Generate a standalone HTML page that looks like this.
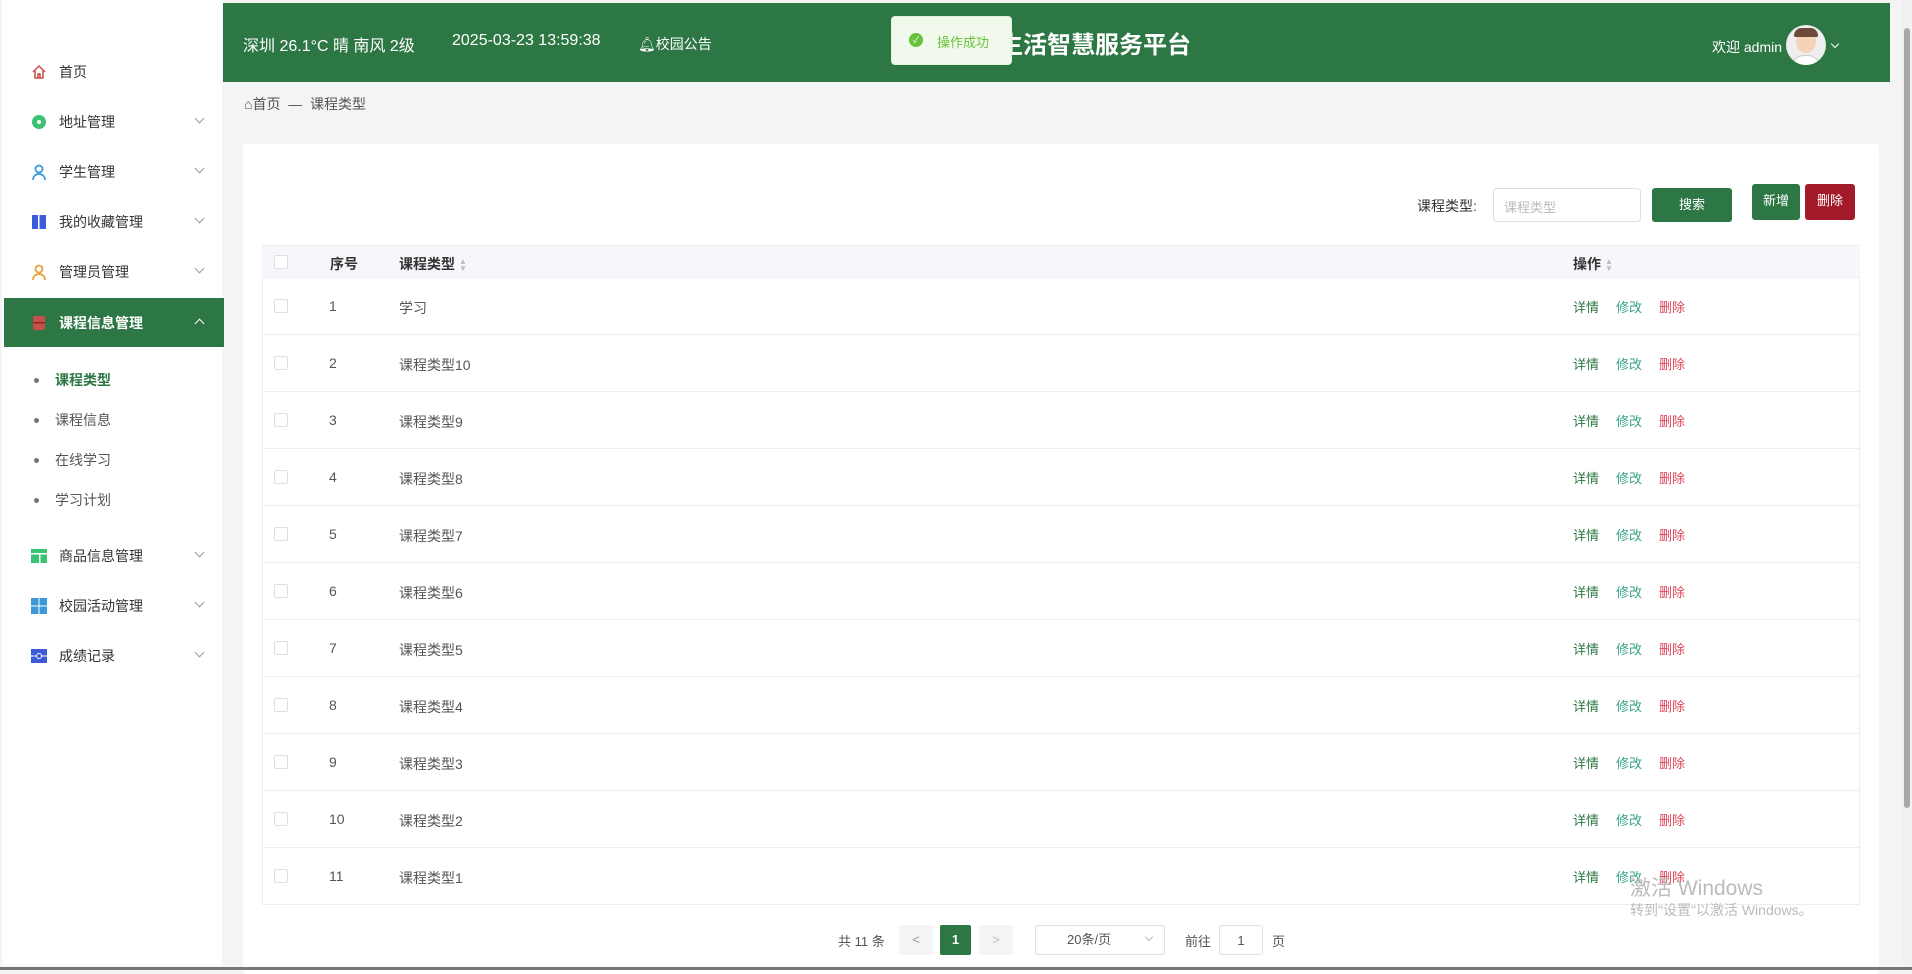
<!DOCTYPE html>
<html><head><meta charset="utf-8"><style>
*{margin:0;padding:0;box-sizing:border-box}
body{width:1912px;height:970px;overflow:hidden;background:#f4f4f4;font-family:"Liberation Sans","Noto Sans CJK SC",sans-serif;position:relative;color:#333}
.abs{position:absolute}
#side{left:2px;top:0;width:220px;height:966px;background:#fff}
.mi{position:absolute;left:2px;width:220px;height:50px;display:flex;align-items:center;font-size:14px;color:#333}
.mi .ic{position:absolute;left:27px;width:16px;height:16px}
.mi .tx{position:absolute;left:55px}
.mi .ar{position:absolute;left:192px;top:18px;width:7px;height:7px;border-right:1px solid #999;border-bottom:1px solid #999;transform:rotate(45deg)}
.sub{position:absolute;left:0;font-size:14px;color:#555}
.sub:before{content:"";position:absolute;left:-21px;top:8px;width:5px;height:5px;border-radius:50%;background:#777}
#hdr{left:223px;top:3px;width:1667px;height:79px;background:#2d7745;color:#fff}
.row{position:absolute;left:262px;width:1598px;height:57px;border-bottom:1px solid #ebeef5;font-size:14px;color:#555}
.row .cb{position:absolute;left:12px;top:21px;width:14px;height:14px;border:1px solid #dcdfe6;border-radius:2px;background:#fff}
.row .n{position:absolute;left:67px;top:20px}
.row .t{position:absolute;left:137px;top:20px}
.row .a{position:absolute;left:1311px;top:19px;font-size:13px}
.a span{margin-right:17px}
.g{color:#2d7745}.tl{color:#3aa38a}.r{color:#e0435a}
.btn{position:absolute;color:#fff;font-size:13px;border-radius:3px;text-align:center}
.so{color:#bbb;font-size:8px;display:inline-block;line-height:7px;vertical-align:middle;margin-left:4px}
</style></head><body>
<div id="side" class="abs">
 <div class="mi" style="top:47px"><svg class="ic" viewBox="0 0 16 16"><path d="M2 8L8 2l6 6M4 6v8h8V6M7 14v-4h2v4" fill="none" stroke="#c9504a" stroke-width="1.5"/></svg><span class="tx">首页</span></div>
 <div class="mi" style="top:97px"><svg class="ic" viewBox="0 0 16 16"><circle cx="8" cy="8" r="7" fill="#3cc273"/><circle cx="8" cy="8" r="2" fill="#fff"/></svg><span class="tx">地址管理</span><i class="ar"></i></div>
 <div class="mi" style="top:147px"><svg class="ic" viewBox="0 0 16 16"><circle cx="8" cy="5" r="3.5" fill="none" stroke="#3a9ad9" stroke-width="1.8"/><path d="M2 16c0-4 3-6 6-6s6 2 6 6" fill="none" stroke="#3a9ad9" stroke-width="1.8"/></svg><span class="tx">学生管理</span><i class="ar"></i></div>
 <div class="mi" style="top:197px"><svg class="ic" viewBox="0 0 16 16"><rect x="1" y="1" width="14" height="14" fill="#3b5bdb"/><rect x="7" y="1" width="1.5" height="14" fill="#fff"/></svg><span class="tx">我的收藏管理</span><i class="ar"></i></div>
 <div class="mi" style="top:247px"><svg class="ic" viewBox="0 0 16 16"><circle cx="8" cy="5" r="3.5" fill="none" stroke="#e6a23c" stroke-width="1.8"/><path d="M2 16c0-4 3-6 6-6s6 2 6 6" fill="none" stroke="#e6a23c" stroke-width="1.8"/></svg><span class="tx">管理员管理</span><i class="ar"></i></div>
 <div class="mi" style="top:298px;height:49px;background:#2d7745;color:#fff;font-weight:bold"><svg class="ic" viewBox="0 0 16 16"><rect x="2" y="1" width="12" height="14" rx="2" fill="#c9504a"/><rect x="2" y="7" width="12" height="1.5" fill="#8b2a25"/></svg><span class="tx">课程信息管理</span><i class="ar" style="transform:rotate(-135deg);top:22px;border-color:#fff"></i></div>
 <div class="sub" style="top:370px;left:53px;color:#2d7745;font-weight:bold">课程类型</div>
 <div class="sub" style="top:410px;left:53px">课程信息</div>
 <div class="sub" style="top:450px;left:53px">在线学习</div>
 <div class="sub" style="top:490px;left:53px">学习计划</div>
 <div class="mi" style="top:531px"><svg class="ic" viewBox="0 0 16 16"><rect x="0" y="1" width="16" height="14" fill="#3cc273"/><rect x="0" y="5" width="16" height="1.5" fill="#fff"/><rect x="8" y="6" width="1.5" height="9" fill="#fff"/></svg><span class="tx">商品信息管理</span><i class="ar"></i></div>
 <div class="mi" style="top:581px"><svg class="ic" viewBox="0 0 16 16"><rect x="0" y="0" width="7.5" height="7.5" fill="#3a9ad9"/><rect x="8.5" y="0" width="7.5" height="7.5" fill="#3a9ad9"/><rect x="0" y="8.5" width="7.5" height="7.5" fill="#3a9ad9"/><rect x="8.5" y="8.5" width="7.5" height="7.5" fill="#3a9ad9"/></svg><span class="tx">校园活动管理</span><i class="ar"></i></div>
 <div class="mi" style="top:631px"><svg class="ic" viewBox="0 0 16 16"><rect x="0" y="1" width="16" height="14" fill="#3b5bdb"/><path d="M0 8h5M11 8h5" stroke="#fff"/><circle cx="8" cy="8" r="2.5" fill="none" stroke="#fff"/></svg><span class="tx">成绩记录</span><i class="ar"></i></div>
</div>
<div id="hdr" class="abs">
 <div class="abs" style="left:20px;top:29px;font-size:16px">深圳 26.1°C 晴 南风 2级</div>
 <div class="abs" style="left:229px;top:29px;font-size:16px">2025-03-23 13:59:38</div>
 <div class="abs" style="left:415px;top:31px;font-size:14px">🔔︎校园公告</div>
 <div class="abs" style="left:728px;top:22px;font-size:24px;font-weight:bold;width:240px;text-align:right">校园生活智慧服务平台</div>
 <div class="abs" style="left:1489px;top:34px;font-size:14px">欢迎 admin</div>
 <div class="abs" style="left:1563px;top:22px;width:40px;height:40px;border-radius:50%;background:#eee;overflow:hidden"><div style="position:absolute;left:10px;top:6px;width:20px;height:22px;border-radius:50%;background:#f4d3b8"></div><div style="position:absolute;left:8px;top:3px;width:24px;height:9px;border-radius:10px 10px 2px 2px;background:#6b4a3a"></div><div style="position:absolute;left:6px;top:30px;width:28px;height:14px;border-radius:12px 12px 0 0;background:#fff;border:1px solid #ccc"></div></div>
 <div class="abs" style="left:1609px;top:38px;width:6px;height:6px;border-right:1px solid #fff;border-bottom:1px solid #fff;transform:rotate(45deg)"></div>
</div>
<div class="abs" style="left:891px;top:16px;width:121px;height:49px;background:#f0f9eb;border:1px solid #e1f3d8;border-radius:4px;font-size:13px;color:#67c23a"><span style="position:absolute;left:17px;top:16px;width:14px;height:14px;border-radius:50%;background:#67c23a;color:#fff;font-size:9px;text-align:center;line-height:14px">✓</span><span style="position:absolute;left:45px;top:15px">操作成功</span></div>
<div class="abs" style="left:1902px;top:0;width:10px;height:966px;background:#f1f1f1"><div style="position:absolute;left:2px;top:28px;width:6px;height:780px;background:#a8a8a8;border-radius:3px"></div></div>
<div class="abs" style="left:244px;top:94px;font-size:14px;color:#555">⌂首页 &nbsp;— &nbsp;课程类型</div>
<div class="abs" style="left:243px;top:144px;width:1636px;height:830px;background:#fff;border-radius:4px"></div>
<div class="abs" style="left:1417px;top:196px;font-size:14px;color:#333">课程类型:</div>
<div class="abs" style="left:1493px;top:188px;width:148px;height:34px;border:1px solid #dcdfe6;border-radius:4px;font-size:13px;color:#bbb;padding:8px 10px">课程类型</div>
<div class="btn" style="left:1652px;top:188px;width:80px;height:34px;line-height:34px;background:#2d7745">搜索</div>
<div class="btn" style="left:1752px;top:184px;width:48px;height:36px;line-height:34px;background:#2d7745">新增</div>
<div class="btn" style="left:1805px;top:184px;width:50px;height:36px;line-height:34px;background:#a31b2b">删除</div>
<div class="abs" style="left:262px;top:245px;width:1598px;height:33px;background:#f6f7fb;border-top:1px solid #ebeef5;border-bottom:1px solid #ebeef5;font-size:14px;font-weight:bold;color:#333">
 <div class="abs" style="left:12px;top:9px;width:14px;height:14px;border:1px solid #dcdfe6;border-radius:2px;background:#fff"></div>
 <div class="abs" style="left:68px;top:8px">序号</div>
 <div class="abs" style="left:137px;top:8px">课程类型<span class="so">▲<br>▼</span></div>
 <div class="abs" style="left:1311px;top:8px">操作<span class="so">▲<br>▼</span></div>
</div>
<div class="row" style="top:278px"><i class="cb"></i><span class="n">1</span><span class="t">学习</span><span class="a"><span class="g">详情</span><span class="tl">修改</span><span class="r">删除</span></span></div>
<div class="row" style="top:335px"><i class="cb"></i><span class="n">2</span><span class="t">课程类型10</span><span class="a"><span class="g">详情</span><span class="tl">修改</span><span class="r">删除</span></span></div>
<div class="row" style="top:392px"><i class="cb"></i><span class="n">3</span><span class="t">课程类型9</span><span class="a"><span class="g">详情</span><span class="tl">修改</span><span class="r">删除</span></span></div>
<div class="row" style="top:449px"><i class="cb"></i><span class="n">4</span><span class="t">课程类型8</span><span class="a"><span class="g">详情</span><span class="tl">修改</span><span class="r">删除</span></span></div>
<div class="row" style="top:506px"><i class="cb"></i><span class="n">5</span><span class="t">课程类型7</span><span class="a"><span class="g">详情</span><span class="tl">修改</span><span class="r">删除</span></span></div>
<div class="row" style="top:563px"><i class="cb"></i><span class="n">6</span><span class="t">课程类型6</span><span class="a"><span class="g">详情</span><span class="tl">修改</span><span class="r">删除</span></span></div>
<div class="row" style="top:620px"><i class="cb"></i><span class="n">7</span><span class="t">课程类型5</span><span class="a"><span class="g">详情</span><span class="tl">修改</span><span class="r">删除</span></span></div>
<div class="row" style="top:677px"><i class="cb"></i><span class="n">8</span><span class="t">课程类型4</span><span class="a"><span class="g">详情</span><span class="tl">修改</span><span class="r">删除</span></span></div>
<div class="row" style="top:734px"><i class="cb"></i><span class="n">9</span><span class="t">课程类型3</span><span class="a"><span class="g">详情</span><span class="tl">修改</span><span class="r">删除</span></span></div>
<div class="row" style="top:791px"><i class="cb"></i><span class="n">10</span><span class="t">课程类型2</span><span class="a"><span class="g">详情</span><span class="tl">修改</span><span class="r">删除</span></span></div>
<div class="row" style="top:848px"><i class="cb"></i><span class="n">11</span><span class="t">课程类型1</span><span class="a"><span class="g">详情</span><span class="tl">修改</span><span class="r">删除</span></span></div>
<div class="abs" style="left:262px;top:278px;width:1px;height:627px;background:#ebeef5"></div>
<div class="abs" style="left:1859px;top:278px;width:1px;height:627px;background:#ebeef5"></div>
<div class="abs" style="left:838px;top:931px;font-size:13px;color:#555">共 11 条</div>
<div class="abs" style="left:899px;top:925px;width:34px;height:30px;background:#f4f4f5;color:#999;text-align:center;line-height:30px;font-size:13px;border-radius:2px">&lt;</div>
<div class="abs" style="left:940px;top:925px;width:31px;height:30px;background:#2d7745;color:#fff;text-align:center;line-height:30px;font-size:13px;font-weight:bold;border-radius:2px">1</div>
<div class="abs" style="left:979px;top:925px;width:34px;height:30px;background:#f4f4f5;color:#bbb;text-align:center;line-height:30px;font-size:13px;border-radius:2px">&gt;</div>
<div class="abs" style="left:1035px;top:925px;width:130px;height:30px;border:1px solid #dcdfe6;border-radius:3px;font-size:13px;color:#555;line-height:28px;padding-left:31px">20条/页<span style="position:absolute;right:12px;top:8px;width:6px;height:6px;border-right:1px solid #bbb;border-bottom:1px solid #bbb;transform:rotate(45deg)"></span></div>
<div class="abs" style="left:1185px;top:931px;font-size:13px;color:#555">前往</div>
<div class="abs" style="left:1219px;top:925px;width:44px;height:30px;border:1px solid #dcdfe6;border-radius:3px;font-size:13px;color:#555;text-align:center;line-height:30px">1</div>
<div class="abs" style="left:1272px;top:931px;font-size:13px;color:#555">页</div>
<div class="abs" style="left:1630px;top:872px;font-size:21px;color:#bbb">激活 Windows</div>
<div class="abs" style="left:1630px;top:900px;font-size:14px;color:#bbb">转到"设置"以激活 Windows。</div>
<div class="abs" style="left:0;top:967px;width:1912px;height:3px;background:#777"></div>
</body></html>
